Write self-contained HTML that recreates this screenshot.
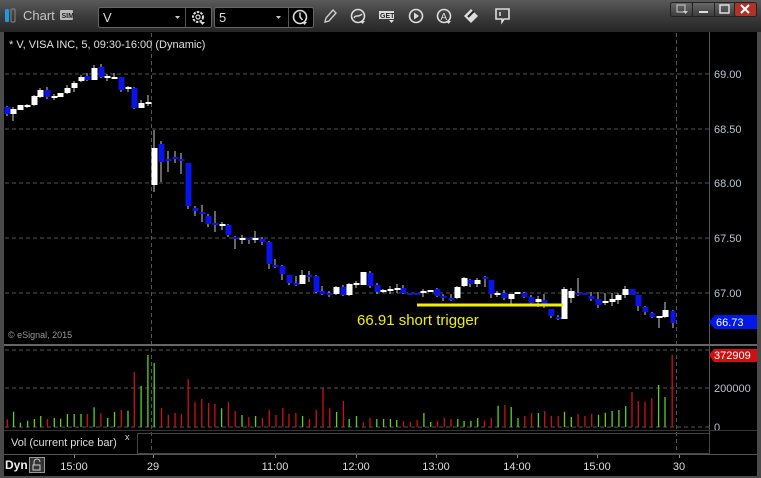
<!DOCTYPE html>
<html><head><meta charset="utf-8"><style>
html,body{margin:0;padding:0;background:#000;width:761px;height:478px;overflow:hidden;font-family:"Liberation Sans",sans-serif}
</style></head><body>
<svg width="761" height="478" xmlns="http://www.w3.org/2000/svg" style="position:absolute;left:0;top:0" font-family="Liberation Sans, sans-serif">
<defs><linearGradient id="tb" x1="0" y1="0" x2="0" y2="1"><stop offset="0" stop-color="#5a5a5a"/><stop offset="0.5" stop-color="#3c3c3c"/><stop offset="1" stop-color="#262626"/></linearGradient>
<linearGradient id="wb" x1="0" y1="0" x2="0" y2="1"><stop offset="0" stop-color="#6a6a6a"/><stop offset="1" stop-color="#3a3a3a"/></linearGradient></defs>
<rect width="761" height="478" fill="#3a3a3a"/>
<rect x="0" y="0" width="761" height="32" fill="url(#tb)"/>
<rect x="0" y="32" width="4" height="446" fill="#4a4a4a"/>
<rect x="757" y="32" width="4" height="446" fill="#4a4a4a"/>
<rect x="4" y="32" width="753" height="444" fill="#000"/>
<rect x="0" y="476" width="761" height="2" fill="#4a4a4a"/>
<!-- toolbar -->
<rect x="5" y="9" width="4" height="13" rx="1" fill="#1e9be0"/>
<rect x="11" y="9" width="4" height="13" rx="1" fill="none" stroke="#888" stroke-width="1"/>
<text x="23" y="20" font-size="13" fill="#c4c4c4">Chart</text>
<rect x="60" y="10" width="13" height="10" rx="1" fill="#bbb"/><text x="61.5" y="18" font-size="7" fill="#222" font-weight="bold">SIM</text>
<rect x="98.5" y="7.5" width="113" height="20" rx="2" fill="#000" stroke="#666"/>
<line x1="185.5" y1="8" x2="185.5" y2="27" stroke="#555"/>
<text x="103" y="22" font-size="13" fill="#ddd">V</text>
<path d="M175 16h5l-2.5 3z" fill="#ccc"/>
<circle cx="198" cy="17" r="5" fill="none" stroke="#ddd" stroke-width="2" stroke-dasharray="2.5 1.2"/><circle cx="198" cy="17" r="2" fill="none" stroke="#ddd" stroke-width="1.2"/><path d="M200 22h5l-2.5 3z" fill="#ddd"/>
<rect x="214.5" y="7.5" width="99" height="20" rx="2" fill="#000" stroke="#666"/>
<line x1="288.5" y1="8" x2="288.5" y2="27" stroke="#555"/>
<text x="219" y="22" font-size="13" fill="#ddd">5</text>
<path d="M276 16h5l-2.5 3z" fill="#ccc"/>
<circle cx="300" cy="17" r="6.5" fill="none" stroke="#ddd" stroke-width="1.6"/><path d="M300 12.5v4.5l2.5 3" stroke="#ddd" stroke-width="1.5" fill="none"/><path d="M302 22h5l-2.5 3z" fill="#ddd"/>
<path d="M325 22l1-4 7-8 3 3-7 8z" fill="none" stroke="#ccc" stroke-width="1.4"/>
<circle cx="358" cy="16" r="6.5" fill="none" stroke="#ddd" stroke-width="1.6"/><path d="M354 18c2-4 4 0 8-4" stroke="#ddd" stroke-width="1.4" fill="none"/><path d="M360 21h5l-2.5 3z" fill="#ddd"/>
<rect x="379" y="11" width="15" height="8" fill="#ddd"/><text x="380" y="18" font-size="7" font-weight="bold" fill="#222">GET</text><path d="M389 20h5l-2.5 3z" fill="#ddd"/>
<circle cx="416" cy="16" r="6.5" fill="none" stroke="#ddd" stroke-width="1.6"/><path d="M414 12.5v7l5-3.5z" fill="#ddd"/>
<circle cx="444" cy="16" r="6.5" fill="none" stroke="#ddd" stroke-width="1.6"/><text x="440.5" y="20" font-size="10" fill="#ddd">A</text><path d="M446 21h5l-2.5 3z" fill="#ddd"/>
<path d="M471 9l7 7-7 7-7-7z" fill="#ddd"/><path d="M468 17l6-6" stroke="#222" stroke-width="2"/>
<path d="M496 9h13v10h-5l-2 3v-3h-6z" fill="none" stroke="#ddd" stroke-width="1.6"/><line x1="500" y1="12" x2="500" y2="16" stroke="#ddd" stroke-width="1.5"/>
<g stroke="#222"><rect x="670.5" y="2.5" width="22" height="14" rx="2" fill="url(#wb)"/><rect x="692.5" y="2.5" width="22" height="14" fill="url(#wb)"/><rect x="714.5" y="2.5" width="20" height="14" fill="url(#wb)"/><rect x="734.5" y="2.5" width="22" height="14" rx="2" fill="#b0332a"/></g>
<rect x="677" y="5" width="8" height="7" fill="none" stroke="#ccc"/><path d="M683 11h5l-2.5 3z" fill="#ccc"/>
<rect x="699" y="11" width="9" height="2" fill="#ddd"/>
<rect x="720" y="5" width="9" height="8" fill="none" stroke="#ddd" stroke-width="1.5"/>
<path d="M741 5l8 8M749 5l-8 8" stroke="#fff" stroke-width="2"/>
<!-- grid -->
<g stroke="#555" stroke-dasharray="4 3"><line x1="5" y1="74" x2="709" y2="74"/><line x1="5" y1="129" x2="709" y2="129"/><line x1="5" y1="183" x2="709" y2="183"/><line x1="5" y1="238" x2="709" y2="238"/><line x1="5" y1="293" x2="709" y2="293"/>
<line x1="5" y1="350" x2="709" y2="350"/><line x1="5" y1="388" x2="709" y2="388"/><line x1="5" y1="427" x2="709" y2="427"/>
<line x1="151.5" y1="33" x2="151.5" y2="455"/><line x1="676.5" y1="33" x2="676.5" y2="455"/></g>
<line x1="709.5" y1="32" x2="709.5" y2="455" stroke="#555"/>
<rect x="4" y="344" width="753" height="2" fill="#666"/>
<text x="9" y="48" font-size="11" fill="#e0e0e0">* V, VISA INC, 5, 09:30-16:00 (Dynamic)</text>
<text x="8" y="338" font-size="9" fill="#999">© eSignal, 2015</text>
<g font-size="11" fill="#b8c4d0"><text x="714" y="78">69.00</text><text x="714" y="133">68.50</text><text x="714" y="187">68.00</text><text x="714" y="242">67.50</text><text x="714" y="297">67.00</text><text x="714" y="392">200000</text><text x="714" y="431">0</text></g>
<path d="M709 322l6-7h42v14h-42z" fill="#0018e8"/><text x="716" y="326" font-size="11" fill="#fff">66.73</text>
<path d="M709 355l5-6h43v13h-43z" fill="#d01010"/><text x="714" y="359" font-size="11" fill="#fff">372909</text>
<!-- candles -->
<g stroke="#ccc" stroke-width="1">
<path d="M7 106v10M13 107v14M27 104v4M34 95v11M40 88v10M47 87v12M54 94v6M67 85v9M74 81v11M81 75v7M87 73v8M94 65v15M101 64v14M107 74v7M114 73v6M121 77v15M128 86v6M134 87v22M141 100v8M148 95v11M154 130v62M161 141v41M168 151v21M175 151v12M181 153v21M188 163v46M195 206v10M202 205v17M208 214v13M215 211v21M222 222v8M228 224v13M235 236v13M242 235v9M249 238v6M255 231v12M262 237v8M269 241v28M275 259v9M282 265v15M289 275v10M296 276v10M302 270v14M309 271v11M316 275v18M322 286v9M329 291v6M336 286v9M343 285v11M349 283v13M356 281v7M363 272v13M370 271v17M377 283v11M383 289v4M390 286v8M397 284v9M403 285v9M423 289v8M437 288v9M443 294v7M451 294v7M457 286v13M464 277v10M470 279v8M477 278v9M485 276v11M491 280v18M497 291v6M504 290v10M511 294v10M524 292v6M531 295v11M538 296v11M544 294v14M551 309v9M558 315v5M564 287v32M571 288v15M578 278v18M591 292v9M598 292v16M605 293v12M612 293v13M618 293v11M625 286v12M638 295v16M645 306v9M652 312v6M659 316v12M665 302v16M673 310v18"/>
</g>
<g fill="#fff">
<rect x="10.5" y="109" width="6" height="5"/><rect x="17.5" y="105" width="6" height="5"/><rect x="24.5" y="105" width="6" height="2"/><rect x="31.5" y="96" width="6" height="9"/><rect x="37.5" y="90" width="6" height="7"/><rect x="51.5" y="96" width="6" height="2"/><rect x="57.5" y="93" width="6" height="4"/><rect x="64.5" y="88" width="6" height="5"/><rect x="71.5" y="83" width="6" height="5"/><rect x="78.5" y="77" width="6" height="4"/><rect x="91.5" y="68" width="6" height="12"/><rect x="104.5" y="76" width="6" height="2"/><rect x="111.5" y="77" width="6" height="2"/><rect x="125.5" y="87" width="6" height="2"/><rect x="138.5" y="103" width="6" height="5"/><rect x="145.5" y="102" width="6" height="2"/>
<rect x="151.5" y="148" width="6" height="37"/><rect x="219.5" y="224" width="6" height="2"/><rect x="239.5" y="238" width="6" height="2"/><rect x="252.5" y="238" width="6" height="2"/><rect x="299.5" y="275" width="6" height="9"/><rect x="333.5" y="287" width="6" height="7"/><rect x="346.5" y="284" width="6" height="11"/><rect x="353.5" y="283" width="6" height="2"/><rect x="360.5" y="272" width="6" height="13"/>
<rect x="380.5" y="290" width="6" height="2"/><rect x="387.5" y="289" width="6" height="2"/><rect x="394.5" y="288" width="6" height="2"/><rect x="420.5" y="291" width="6" height="2"/><rect x="427.5" y="290" width="6" height="2"/><rect x="454.5" y="287" width="6" height="11"/><rect x="461.5" y="278" width="6" height="8"/><rect x="474.5" y="280" width="6" height="4"/><rect x="494.5" y="293" width="6" height="2"/><rect x="508.5" y="294" width="6" height="5"/><rect x="514.5" y="292" width="6" height="2"/><rect x="535.5" y="299" width="6" height="3"/><rect x="561.5" y="289" width="6" height="30"/><rect x="568.5" y="291" width="6" height="7"/><rect x="602.5" y="301" width="6" height="2"/><rect x="609.5" y="299" width="6" height="3"/><rect x="615.5" y="295" width="6" height="5"/><rect x="622.5" y="289" width="6" height="6"/><rect x="656.5" y="316" width="6" height="2"/><rect x="662.5" y="310" width="6" height="7"/>
</g>
<g fill="#0a14e6">
<rect x="4.5" y="107" width="6" height="7"/><rect x="44.5" y="90" width="6" height="7"/><rect x="84.5" y="76" width="6" height="4"/><rect x="98.5" y="67" width="6" height="10"/><rect x="118.5" y="77" width="6" height="13"/><rect x="131.5" y="88" width="6" height="20"/>
<rect x="158.5" y="144" width="6" height="18"/><rect x="165.5" y="159" width="6" height="2"/><rect x="172.5" y="157" width="6" height="2"/><rect x="178.5" y="159" width="6" height="2"/><rect x="185.5" y="163" width="6" height="43"/><rect x="192.5" y="208" width="6" height="3"/><rect x="199.5" y="212" width="6" height="2"/><rect x="205.5" y="216" width="6" height="8"/><rect x="212.5" y="223" width="6" height="2"/><rect x="225.5" y="225" width="6" height="10"/><rect x="232.5" y="237" width="6" height="2"/><rect x="246.5" y="238" width="6" height="2"/><rect x="259.5" y="239" width="6" height="3"/><rect x="266.5" y="242" width="6" height="22"/><rect x="272.5" y="265" width="6" height="2"/><rect x="279.5" y="266" width="6" height="8"/><rect x="286.5" y="275" width="6" height="8"/><rect x="293.5" y="283" width="6" height="2"/><rect x="306.5" y="275" width="6" height="2"/><rect x="313.5" y="276" width="6" height="16"/><rect x="319.5" y="291" width="6" height="3"/><rect x="326.5" y="293" width="6" height="2"/><rect x="340.5" y="287" width="6" height="8"/><rect x="367.5" y="273" width="6" height="13"/><rect x="374.5" y="285" width="6" height="7"/>
<rect x="400.5" y="288" width="6" height="5"/><rect x="407.5" y="293" width="6" height="2"/><rect x="414.5" y="293" width="6" height="2"/><rect x="434.5" y="289" width="6" height="7"/><rect x="440.5" y="296" width="6" height="2"/><rect x="448.5" y="298" width="6" height="2"/><rect x="467.5" y="280" width="6" height="4"/><rect x="482.5" y="277" width="6" height="2"/><rect x="488.5" y="280" width="6" height="14"/><rect x="501.5" y="293" width="6" height="5"/><rect x="521.5" y="293" width="6" height="4"/><rect x="528.5" y="297" width="6" height="6"/><rect x="541.5" y="300" width="6" height="5"/><rect x="548.5" y="309" width="6" height="7"/><rect x="555.5" y="317" width="6" height="2"/><rect x="575.5" y="293" width="6" height="2"/><rect x="582.5" y="293" width="6" height="2"/><rect x="588.5" y="296" width="6" height="3"/><rect x="595.5" y="299" width="6" height="6"/><rect x="629.5" y="289" width="6" height="6"/><rect x="635.5" y="295" width="6" height="11"/><rect x="642.5" y="307" width="6" height="5"/><rect x="649.5" y="313" width="6" height="4"/><rect x="670.5" y="311" width="5" height="12"/>
</g>
<rect x="417" y="303.5" width="146" height="3" fill="#f0f000"/>
<text x="357" y="325" font-size="15" fill="#f0f000">66.91 short trigger</text>
<!-- volume -->
<path stroke="#d01010" stroke-width="1.3" fill="none" d="M7.3 419.3V427M47.5 419V427M87.3 414V427M100.9 413.3V427M121.3 410V427M134.3 372V427M161.5 408V427M168.3 415V427M175.1 413V427M181.4 414V427M188.2 379.3V427M195 402V427M201.8 399V427M208.6 403V427M214.9 404V427M228.4 402V427M235.2 411V427M248.8 417.3V427M262.4 418V427M269.2 410V427M276 415V427M282.8 408V427M289 414V427M295.9 413V427M309.4 419V427M316.2 410V427M323 388.3V427M329.8 408.3V427M343.4 401V427M363.3 422.3V427M370 418V427M403.5 421V427M410.3 422V427M417.1 420V427M437.5 421V427M444.3 418V427M451 419V427M484.5 420.7V427M491.3 418V427M504.9 405V427M524.8 416V427M531.6 413V427M544.7 411.3V427M551.4 416V427M558.2 416V427M578.1 414V427M584.9 416V427M591.7 413.7V427M632 392V427M638.3 401V427M645 401.7V427M651.8 398V427M672.2 355V427"/>
<path stroke="#5ad21e" stroke-width="1.3" fill="none" d="M13.6 411.7V427M20.4 422.7V427M27.6 420.7V427M34.4 419V427M40.7 416V427M54.3 418V427M60.6 418.7V427M67.4 414V427M74.2 414V427M81 414V427M94.1 407.3V427M107.7 418V427M114.5 412V427M128 410.7V427M141.1 386V427M147.9 355V427M154.2 363V427M221.6 408.3V427M242 415V427M255.6 416V427M302.6 416V427M336.6 412V427M349.2 419V427M356.5 416V427M376.8 419V427M383.6 419V427M390.4 419V427M396.7 420V427M423.9 413V427M430.7 422V427M457.8 419V427M464.1 421V427M470.9 420.7V427M477.7 418V427M498.1 405.7V427M511.2 407V427M518 418V427M538.4 413V427M564.5 411.7V427M571.3 417V427M598.5 414.7V427M605.3 412.7V427M612.1 411V427M618.9 410V427M625.7 406V427M658.6 385V427M665 397V427"/>
<!-- vol label row -->
<rect x="4" y="430" width="753" height="1" fill="#333"/>
<text x="11" y="446" font-size="11" fill="#ddd">Vol (current price bar)</text>
<text x="125" y="440" font-size="9" fill="#ddd">x</text>
<rect x="137.5" y="433.5" width="572" height="20" fill="none" stroke="#444"/>
<rect x="4" y="454" width="753" height="1" fill="#555"/>
<!-- time axis -->
<text x="5" y="469" font-size="12" font-weight="bold" fill="#eee">Dyn</text>
<rect x="29.5" y="457.5" width="15" height="15" fill="#333" stroke="#999"/><path d="M34 465v-3a3 3 0 0 1 6 0M33 465h7v5h-7z" stroke="#ccc" fill="none"/>
<g stroke="#888"><path d="M74.5 455v3M153.5 455v3M275.5 455v3M356.5 455v3M436.5 455v3M517.5 455v3M597.5 455v3M679.5 455v3"/></g>
<g font-size="11" fill="#ddd" text-anchor="middle"><text x="74" y="470">15:00</text><text x="153" y="470">29</text><text x="275" y="470">11:00</text><text x="356" y="470">12:00</text><text x="436" y="470">13:00</text><text x="517" y="470">14:00</text><text x="597" y="470">15:00</text><text x="679" y="470">30</text></g>
</svg>
</body></html>
